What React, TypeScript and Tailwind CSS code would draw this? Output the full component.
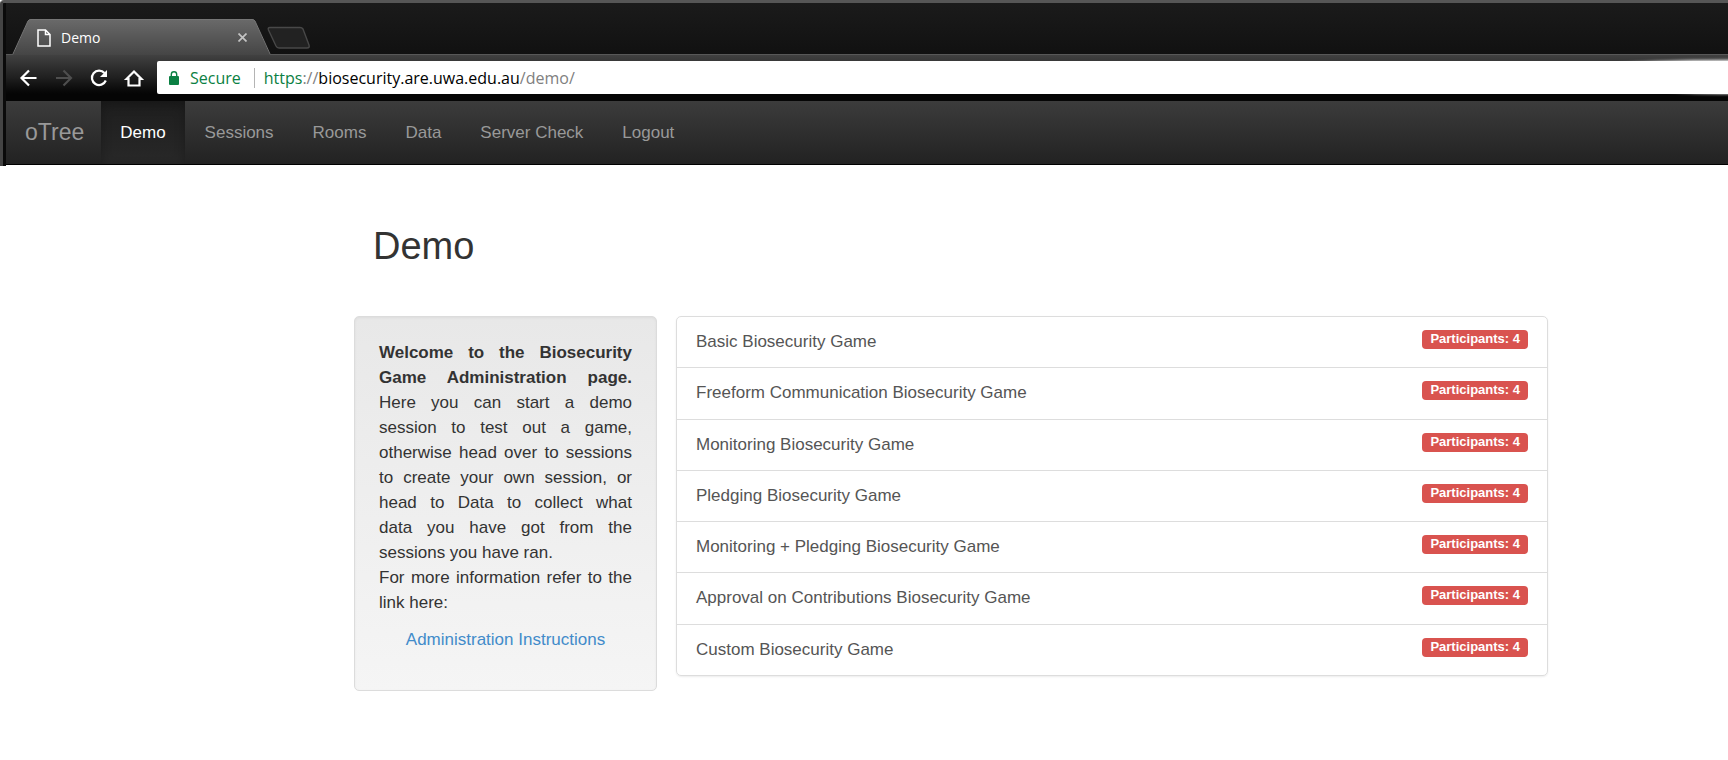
import React from "react";

const navItems = ["Sessions", "Rooms", "Data", "Server Check", "Logout"];

const games = [
  "Basic Biosecurity Game",
  "Freeform Communication Biosecurity Game",
  "Monitoring Biosecurity Game",
  "Pledging Biosecurity Game",
  "Monitoring + Pledging Biosecurity Game",
  "Approval on Contributions Biosecurity Game",
  "Custom Biosecurity Game",
];

function TabStrip() {
  return (
    <div className="flex h-[54px] items-end border-t-[3px] border-[#565656] bg-linear-to-b from-[#1b1b1b] to-[#111111]">
      <div className="relative h-[35px] w-[260px] shrink-0">
        <svg className="absolute inset-0" width="266" height="36" viewBox="0 0 266 36" aria-hidden="true">
          <defs>
            <linearGradient id="tab" x1="0" y1="0" x2="0" y2="1">
              <stop offset="0" stopColor="#6a6a6a" />
              <stop offset="1" stopColor="#454545" />
            </linearGradient>
          </defs>
          <path d="M7 36 L22 2 Q23 0 25 0 H246 Q248 0 249 2 L264 36 Z" fill="url(#tab)" />
          <path d="M7 35 L22 2 Q23 .5 25 .5 H246 Q248 .5 249 2 L264 35" fill="none" stroke="#767676" strokeWidth="1" />
        </svg>
        <div className="relative flex h-full items-center pl-[30px] pr-[17px] pt-[2px]">
          <svg width="16" height="20" viewBox="0 0 16 20" fill="none" stroke="#fff" strokeWidth="1.5" aria-hidden="true">
            <path d="M2 2 H9.500 L14 6.500 V18 H2 Z M9.500 2 V6.500 H14" />
          </svg>
          <span className="ml-[9px] flex-1 font-['Open_Sans','Noto_Sans',sans-serif] text-[14px] text-white">Demo</span>
          <button type="button" aria-label="Close tab" className="p-[2px]">
            <svg width="9" height="9" viewBox="0 0 9 9" stroke="#c4c4c4" strokeWidth="1.7">
              <path d="M.5 .5 L8.5 8.5 M8.5 .5 L.5 8.5" />
            </svg>
          </button>
        </div>
      </div>
      <button type="button" aria-label="New tab" className="mb-[4px]">
        <svg width="46" height="24" viewBox="0 0 46 24" fill="#222" stroke="#484848" strokeWidth="1.4">
          <path d="M4 1.500 H34 Q36 1.500 37 3 L43 19 Q44 22 41 22 H13 Q11 22 10 20 L2.500 4 Q1.500 1.500 4 1.500 Z" />
        </svg>
      </button>
    </div>
  );
}

function Toolbar() {
  return (
    <div className="flex h-[47px] items-start border-t border-[#585858] bg-linear-to-b from-[#414141] via-[#1f1f1f] via-50% to-[#050505] to-85%">
      <div className="flex w-[151px] shrink-0 items-center gap-[11px] pl-[11px] pt-[11px]">
        <button type="button" aria-label="Back">
          <svg width="24" height="24" viewBox="0 0 24 24" fill="none" stroke="#fff" strokeWidth="2.2">
            <path d="M19.500 12 H5 M12 4.500 L4.500 12 L12 19.500" />
          </svg>
        </button>
        <button type="button" aria-label="Forward">
          <svg width="24" height="24" viewBox="0 0 24 24" fill="none" stroke="#4e4e4e" strokeWidth="2.2">
            <path d="M4 12 H18.500 M11.500 4.500 L19 12 L11.500 19.500" />
          </svg>
        </button>
        <button type="button" aria-label="Reload">
          <svg width="24" height="24" viewBox="0 0 24 24" fill="none" stroke="#fff" strokeWidth="2.2">
            <path d="M17.500 7 A7.200 7.200 0 1 0 18.800 14.500" />
            <path d="M20 4 V11 H13 Z" fill="#fff" stroke="none" />
          </svg>
        </button>
        <button type="button" aria-label="Home">
          <svg width="24" height="24" viewBox="0 0 24 24" fill="none" stroke="#fff" strokeWidth="2.2">
            <path d="M4.500 13 L12 5.500 L19.500 13 H17.500 V19.500 H6.500 V13 Z" />
          </svg>
        </button>
      </div>
      <div className="relative mt-[6px] flex h-[33px] min-w-0 flex-1 items-center rounded-l-[2px] bg-white pl-[12px] font-['Open_Sans','Noto_Sans',sans-serif] text-[16px]">
        <svg width="10" height="14" viewBox="0 0 10 14" aria-hidden="true">
          <rect x="0" y="5" width="10" height="9" rx="1" fill="#0b8043" />
          <path d="M2.300 6 V3.500 A2.700 2.700 0 0 1 7.700 3.500 V6" fill="none" stroke="#0b8043" strokeWidth="1.400" />
        </svg>
        <span className="ml-[11px] text-[#0b8043]">Secure</span>
        <span className="ml-[13px] mr-[9px] h-[20px] w-px bg-[#b4b4b4]" />
        <span className="whitespace-nowrap text-[#808080]">
          <span className="text-[#0b8043]">https</span>://<span className="text-black">biosecurity.are.uwa.edu.au</span>/demo/
        </span>
        <svg className="absolute right-0 -top-[8px]" width="130" height="48" viewBox="0 0 130 48" aria-hidden="true">
          <defs>
            <filter id="soft" x="-10%" y="-10%" width="120%" height="120%">
              <feGaussianBlur stdDeviation="1.5" />
            </filter>
          </defs>
          <path d="M12 12 Q50 7 140 7 V41 Q90 41 70 38 Z" fill="#fff" filter="url(#soft)" />
        </svg>
      </div>
    </div>
  );
}

function NavBar() {
  return (
    <nav className="flex h-[64px] items-stretch gap-px border-b border-black bg-linear-to-b from-[#3c3c3c] to-[#222222] text-[17px] text-[#999999]">
      <a href="#" className="flex items-center pl-[19px] pr-[16px] text-[23px]">oTree</a>
      <a href="#" aria-current="page" className="flex items-center bg-linear-to-b from-[#1e1e1e] to-[#282828] px-[19px] text-white shadow-[inset_0_4px_11px_rgba(0,0,0,0.25)]">
        Demo
      </a>
      {navItems.map((item) => (
        <a key={item} href="#" className="flex items-center px-[19px]">
          {item}
        </a>
      ))}
    </nav>
  );
}

export default function App() {
  return (
    <div className="min-h-screen bg-white font-['Liberation_Sans',Arial,sans-serif] text-[#333333]">
      <header className="flex">
        <div className="-mb-px w-[6px] shrink-0 rounded-tl-[4px] border-l-[3px] border-t-[3px] border-l-[#444444] border-t-[#565656] bg-[#0a0a0a]" />
        <div className="min-w-0 flex-1">
          <TabStrip />
          <Toolbar />
          <NavBar />
        </div>
      </header>
      <main className="pl-[354px] pr-[180px] pt-[60px]">
        <h1 className="pl-[19px] text-[38px] leading-[42px]">Demo</h1>
        <div className="mt-[49px] flex items-start gap-[19px]">
          <aside className="w-[303px] shrink-0 rounded-[5px] border border-[#dcdcdc] bg-linear-to-b from-[#e8e8e8] to-[#f5f5f5] px-[24px] pb-[38px] pt-[23px] text-[17px] leading-[25px] shadow-[inset_0_1px_3px_rgba(0,0,0,0.05),0_1px_0_rgba(255,255,255,0.1)]">
            <p className="text-justify">
              <strong>Welcome to the Biosecurity Game Administration page.</strong> Here you can start a demo session to
              test out a game, otherwise head over to sessions to create your own session, or head to Data to collect
              what data&nbsp;you have got from the sessions you have ran.
              <br />
              For more information refer to the link here:
            </p>
            <p className="mt-[12px] text-center">
              <a href="#" className="text-[#428bca]">Administration Instructions</a>
            </p>
          </aside>
          <ul className="flex min-h-[360px] min-w-0 flex-1 flex-col divide-y divide-[#dddddd] rounded-[5px] border border-[#dddddd] shadow-[0_1px_2px_rgba(0,0,0,0.075)]">
            {games.map((game) => (
              <li key={game} className="flex flex-1">
                <a href="#" className="flex flex-1 items-start justify-between px-[19px] pt-[12px] text-[17px] leading-[25px] text-[#555555]">
                  <span>{game}</span>
                  <span className="mt-px rounded-[4px] bg-[#d9534f] px-[8px] pb-[2px] text-[13px] font-bold leading-[17px] text-white">
                    Participants: 4
                  </span>
                </a>
              </li>
            ))}
          </ul>
        </div>
      </main>
    </div>
  );
}
